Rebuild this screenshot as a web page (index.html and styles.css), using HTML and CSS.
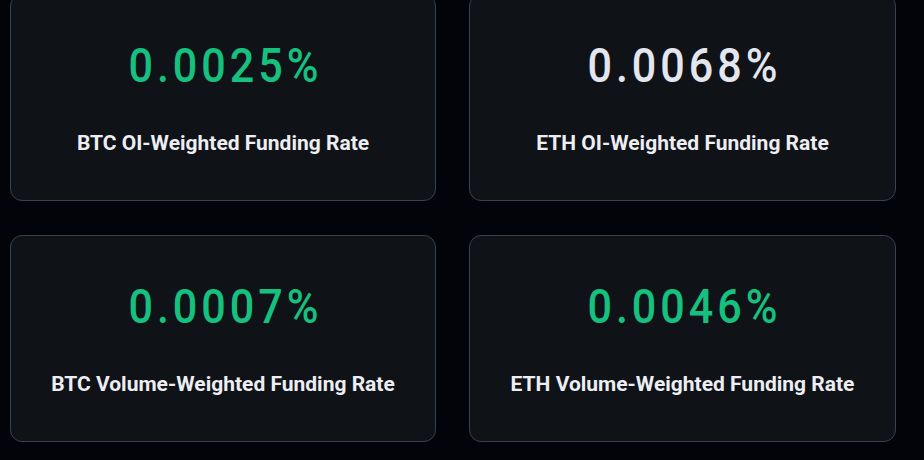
FILE: index.html
```html
<!DOCTYPE html>
<html lang="en">
<head>
<meta charset="utf-8">
<title>Funding Rates</title>
<link rel="stylesheet" href="styles.css">
</head>
<body>
  <main class="rates">
    <section class="rate-card">
      <div class="rate-value up">0.0025%</div>
      <div class="rate-label">BTC OI-Weighted Funding Rate</div>
    </section>
    <section class="rate-card">
      <div class="rate-value flat">0.0068%</div>
      <div class="rate-label">ETH OI-Weighted Funding Rate</div>
    </section>
    <section class="rate-card">
      <div class="rate-value up">0.0007%</div>
      <div class="rate-label">BTC Volume-Weighted Funding Rate</div>
    </section>
    <section class="rate-card">
      <div class="rate-value up">0.0046%</div>
      <div class="rate-label">ETH Volume-Weighted Funding Rate</div>
    </section>
  </main>
</body>
</html>
```

FILE: styles.css
```css
html, body {
  margin: 0;
  padding: 0;
  background: #03040a;
  overflow: hidden;
}

body {
  font-family: Roboto, "Noto Sans", Arial, sans-serif;
  color: #e6e8ee;
}

.rates {
  display: grid;
  grid-template-columns: 426px 427px;
  column-gap: 33px;
  row-gap: 34px;
  padding-left: 10px;
  margin-top: -6px;
}

.rate-card {
  box-sizing: border-box;
  display: flex;
  flex-direction: column;
  align-items: center;
  padding: 43px 16px;
  background: #0f1217;
  border: 1.5px solid #3d4047;
  border-radius: 12px;
}

/* condensed, widely tracked figures */
.rate-value {
  font-size: 49px;
  line-height: 56px;
  font-weight: 500;
  letter-spacing: 4.5px;
  padding-left: 4.5px;
  transform: scaleX(0.88);
}

.rate-value.up {
  color: #16c07f;
}

.rate-value.flat {
  color: #e3e6ee;
}

.rate-label {
  margin-top: 35px;
  font-size: 21px;
  line-height: 28px;
  font-weight: 700;
  letter-spacing: 0;
  color: #eceef3;
}
```
